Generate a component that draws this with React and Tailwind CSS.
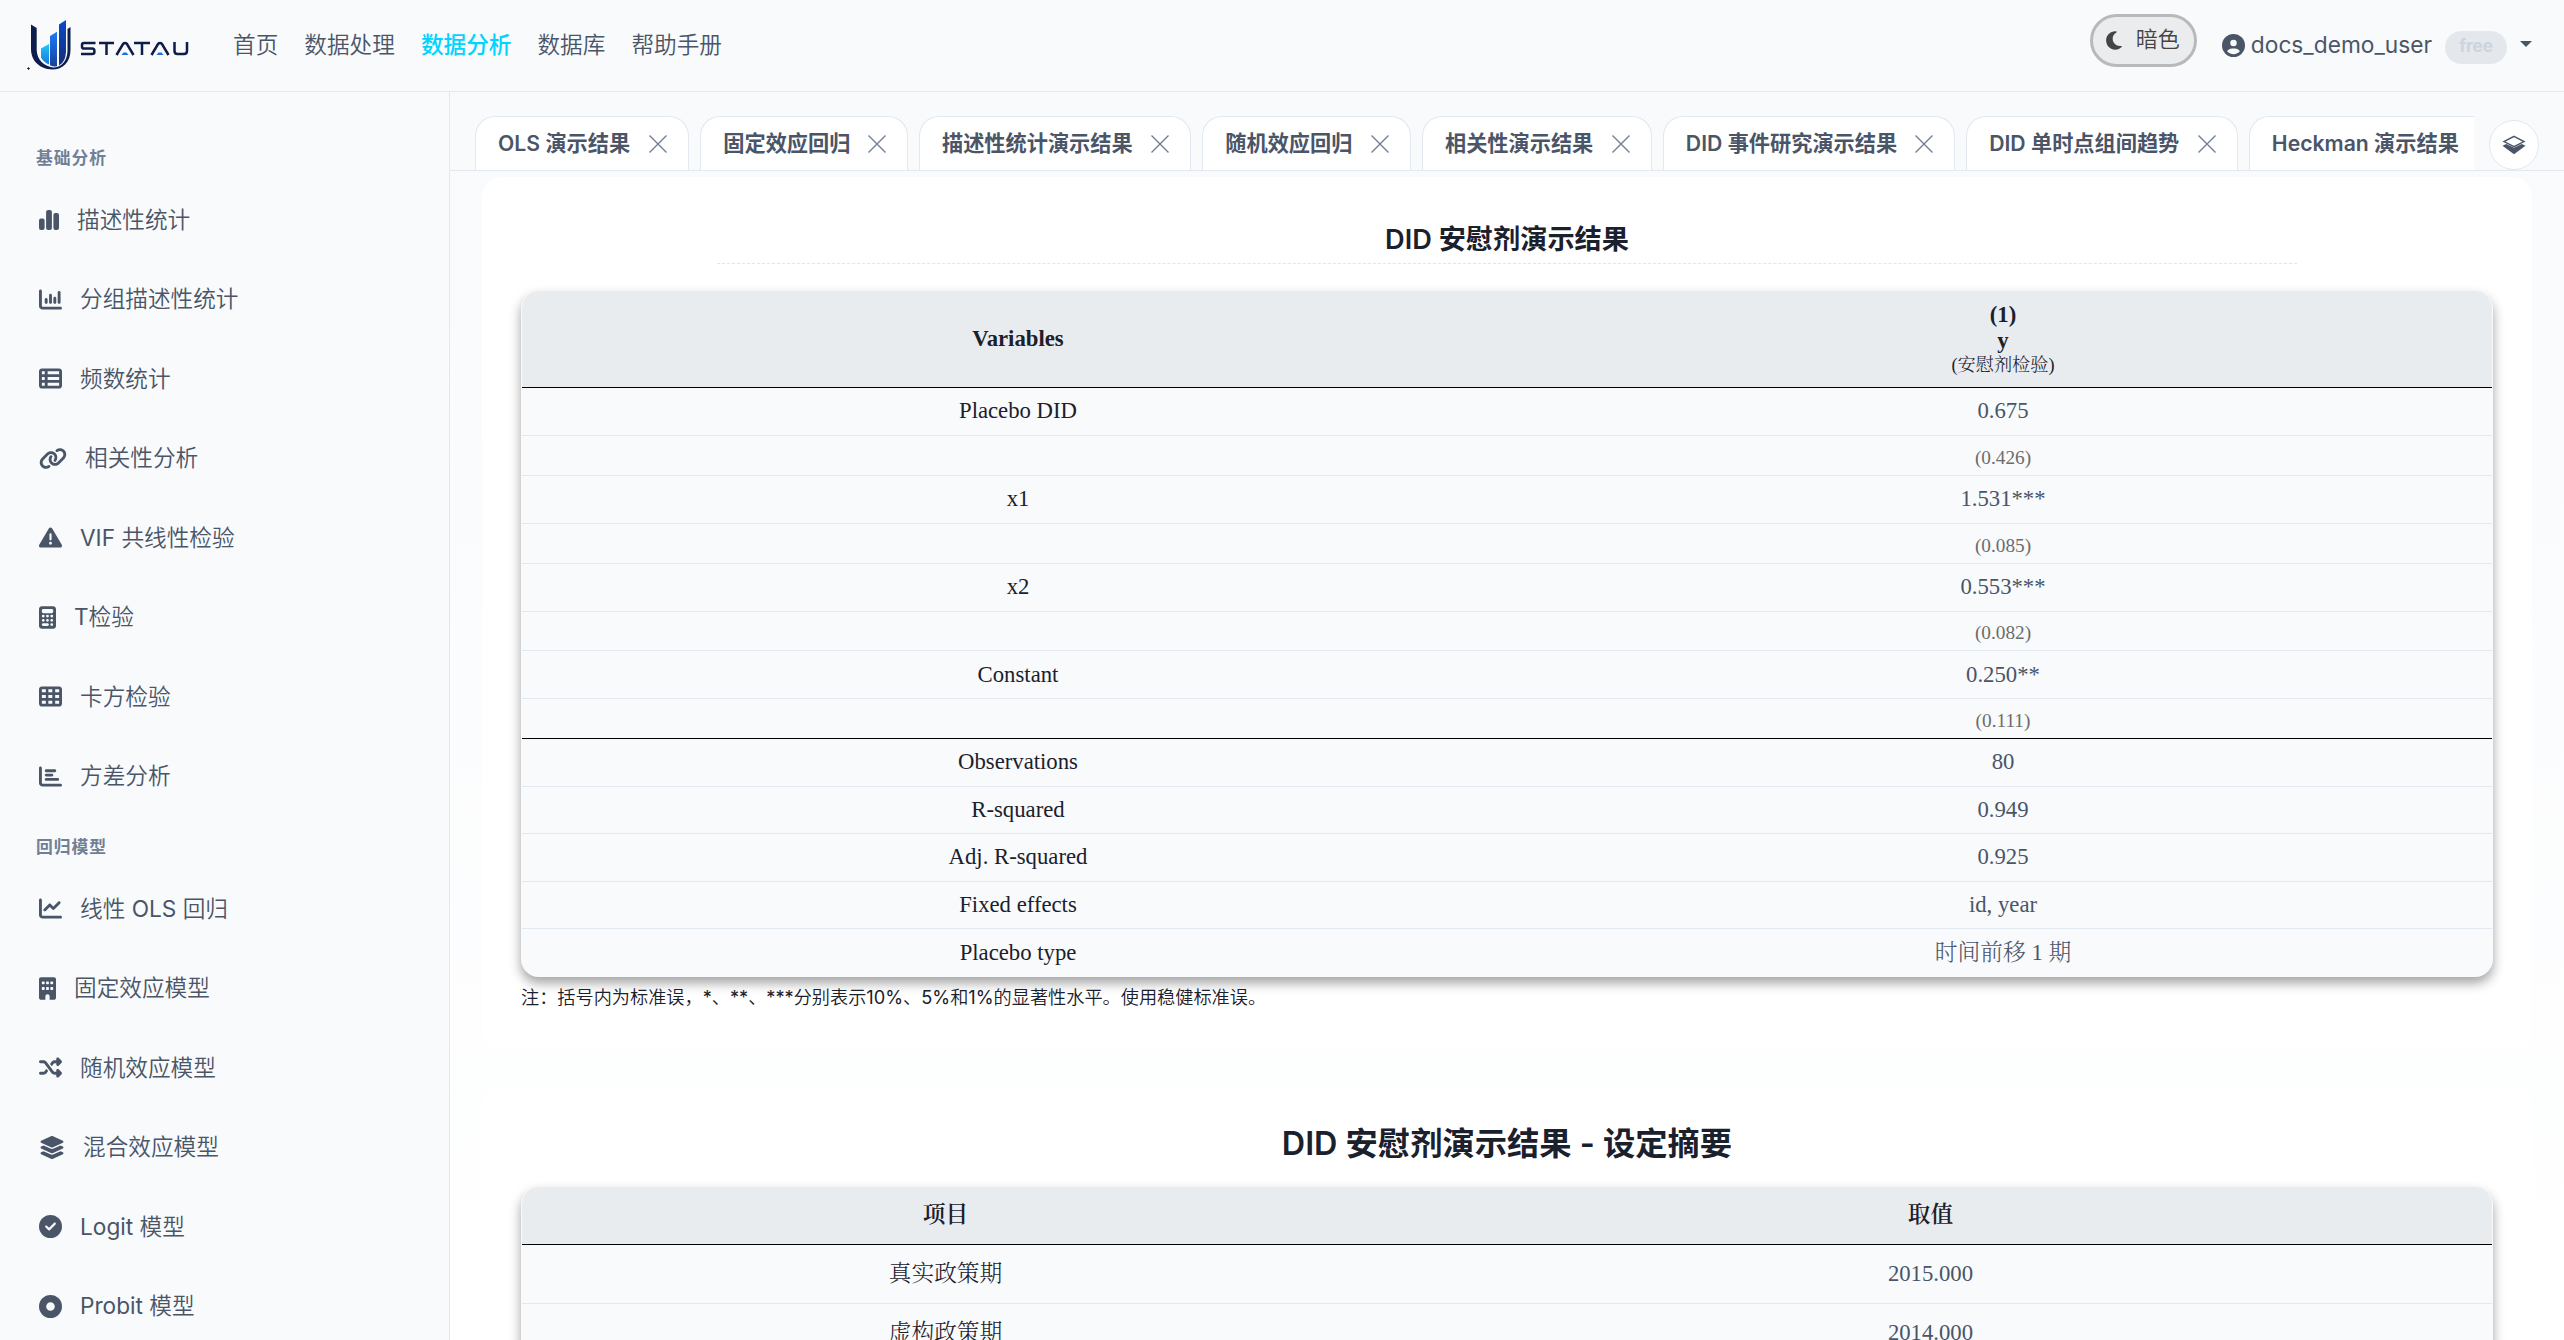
import {
  FaChartColumn,
  FaTableList,
  FaLink,
  FaTriangleExclamation,
  FaCalculator,
  FaTableCells,
  FaChartBar,
  FaChartLine,
  FaBuilding,
  FaShuffle,
  FaLayerGroup,
  FaCircleCheck,
  FaCircleDot,
  FaMoon,
  FaCircleUser,
} from 'react-icons/fa6';

const navItems = ['首页', '数据处理', '数据分析', '数据库', '帮助手册'];

const SimpleBars = ({ className }) => (
  <svg viewBox="0 0 20 20" className={className} fill="currentColor">
    <rect x="0" y="8.4" width="5.6" height="11.6" rx="2" />
    <rect x="7.1" y="0" width="5.8" height="20" rx="2" />
    <rect x="14.4" y="3" width="5.6" height="17" rx="2" />
  </svg>
);

const menu = [
  {
    title: '基础分析',
    items: [
      { label: '描述性统计', icon: SimpleBars, size: 'w-[20px] h-[20px]' },
      { label: '分组描述性统计', icon: FaChartColumn, size: 'w-[23px] h-[23px]' },
      { label: '频数统计', icon: FaTableList, size: 'w-[23px] h-[23px]' },
      { label: '相关性分析', icon: FaLink, size: 'w-[28px] h-[23px]' },
      { label: 'VIF 共线性检验', icon: FaTriangleExclamation, size: 'w-[23px] h-[23px]' },
      { label: 'T检验', icon: FaCalculator, size: 'w-[17px] h-[23px]' },
      { label: '卡方检验', icon: FaTableCells, size: 'w-[23px] h-[23px]' },
      { label: '方差分析', icon: FaChartBar, size: 'w-[23px] h-[23px]' },
    ],
  },
  {
    title: '回归模型',
    items: [
      { label: '线性 OLS 回归', icon: FaChartLine, size: 'w-[23px] h-[23px]' },
      { label: '固定效应模型', icon: FaBuilding, size: 'w-[17px] h-[23px]' },
      { label: '随机效应模型', icon: FaShuffle, size: 'w-[23px] h-[23px]' },
      { label: '混合效应模型', icon: FaLayerGroup, size: 'w-[26px] h-[23px]' },
      { label: 'Logit 模型', icon: FaCircleCheck, size: 'w-[23px] h-[23px]' },
      { label: 'Probit 模型', icon: FaCircleDot, size: 'w-[23px] h-[23px]' },
    ],
  },
];

const tabs = [
  { label: 'OLS 演示结果', width: 'w-[214.3px]' },
  { label: '固定效应回归', width: 'w-[207.7px]' },
  { label: '描述性统计演示结果', width: 'w-[272.3px]' },
  { label: '随机效应回归', width: 'w-[208.7px]' },
  { label: '相关性演示结果', width: 'w-[229.9px]' },
  { label: 'DID 事件研究演示结果', width: 'w-[292.3px]' },
  { label: 'DID 单时点组间趋势', width: 'w-[271.7px]' },
  { label: 'Heckman 演示结果', width: 'w-[290px]' },
];

const results = [
  { name: 'Placebo DID', value: '0.675', se: '(0.426)' },
  { name: 'x1', value: '1.531***', se: '(0.085)' },
  { name: 'x2', value: '0.553***', se: '(0.082)' },
  { name: 'Constant', value: '0.250**', se: '(0.111)' },
];

const stats = [
  ['Observations', '80'],
  ['R-squared', '0.949'],
  ['Adj. R-squared', '0.925'],
  ['Fixed effects', 'id, year'],
  ['Placebo type', '时间前移 1 期'],
];

const summary = [
  ['真实政策期', '2015.000'],
  ['虚构政策期', '2014.000'],
];

const Logo = () => (
  <svg viewBox="0 0 180 70" className="w-[180px] h-[70px]">
    <defs>
      <linearGradient id="bar1" x1="0" y1="0" x2="0" y2="1">
        <stop offset="0" stopColor="#1ec8fa" />
        <stop offset="1" stopColor="#1b76d8" />
      </linearGradient>
      <linearGradient id="bar2" x1="0" y1="0" x2="0" y2="1">
        <stop offset="0" stopColor="#1c7cfa" />
        <stop offset="1" stopColor="#173f9c" />
      </linearGradient>
      <linearGradient id="bar3" x1="0" y1="0" x2="0" y2="1">
        <stop offset="0" stopColor="#0a49c8" />
        <stop offset="1" stopColor="#142c78" />
      </linearGradient>
    </defs>
    {/* U shaped frame */}
    <path d="M11 14.5 L16.7 18 V40 C17 50 24 56 33 57.6 C42 57.5 47.3 50 47.5 41 V19 L50.5 17 V40 C50.5 52 43 59.5 32 59.5 C20 59 11 51 11 39 Z" fill="#0d1d4d" />
    <path d="M21 38.5 L29 34 V54.5 Q23.5 52 21 47.5 Z" fill="url(#bar1)" />
    <path d="M30 26 L37 21.7 V56.3 Q33 56.8 30 55.2 Z" fill="url(#bar2)" />
    <path d="M39 14.5 L46 10 V42 Q45.5 52 39 55.6 Z" fill="url(#bar3)" />
    <path d="M7 58.5 H10 M8.5 57 V60" stroke="#0d1d4d" strokeWidth="0.8" />
    {/* Wordmark strokes */}
    <g fill="none" stroke="#0e1c48" strokeWidth="2.5">
      <path d="M75.5 33 H64 Q62 33 62 35 V36.5 Q62 38.6 64 38.6 H72 Q74.4 38.6 74.4 41 V42 Q74.4 44 72 44 H61" />
      <path d="M79 33 H94 M86.5 33 V45" />
      <path d="M96.5 45 L103 34 Q105 32 107 34 L113.5 45" />
      <path d="M114 33 H130 M122 33 V45" />
      <path d="M131.5 45 L138 34 Q140 32 142 34 L148.5 45" />
      <path d="M154.5 32 V41 Q154.5 44 157.5 44 H164 Q167 44 167 41 V32" />
    </g>
    <path d="M101.5 45 L103.5 42.5 H106.5 L108.5 45 Z" fill="#1b6fe8" />
    <path d="M136.5 45 L138.5 42.5 H141.5 L143.5 45 Z" fill="#1b6fe8" />
  </svg>
);

const CloseIcon = () => (
  <svg viewBox="0 0 18 18" className="w-[18px] h-[18px] shrink-0" stroke="#718096" strokeWidth="1.4">
    <path d="M0.5 0.5 L17.5 17.5 M17.5 0.5 L0.5 17.5" />
  </svg>
);

const StackIcon = () => (
  <svg viewBox="0 0 24 20" className="w-[24px] h-[20px]">
    <path d="M12 1.3 L22 6.6 L12 11.6 L2 6.6 Z" fill="none" stroke="#4a5568" strokeWidth="1.4" />
    <path d="M0.5 10.8 L4.2 9 L12 12.8 L19.8 9 L23.5 10.8 L12 19.2 Z" fill="#4a5568" />
  </svg>
);

// Lighter CJK face for body text, the full family for anything bold
const bodyFont = "font-['Inter','Noto_Sans_CJK_SC_DemiLight','Noto_Sans_CJK_SC',sans-serif]";
const boldFont = "font-['Inter','Noto_Sans_CJK_SC',sans-serif]";

const Header = () => (
  <header className="flex h-[92px] shrink-0 border-b border-[#e2e8f0] bg-[#f8fafc]">
    <div className="pl-5 pt-[10px] w-[233px]">
      <Logo />
    </div>
    <nav className="flex gap-[26px] h-[90px] items-center text-[22.65px]">
      {navItems.map((item) => (
        <a key={item} className={item === '数据分析' ? `${boldFont} text-[#00d4ff] font-medium` : ''}>
          {item}
        </a>
      ))}
    </nav>
    <div className="ml-auto flex pr-8">
      <button className="mt-[14px] flex h-[53px] w-[107px] items-center gap-[13px] rounded-full border-[3px] border-[#b9b9b9] bg-[#ebecee] pl-3 text-[22px] text-[#444]">
        <FaMoon className="h-[21px] w-[18px] shrink-0" />
        <span className="whitespace-nowrap pb-[3px]">暗色</span>
      </button>
      <div className="ml-[25px] flex h-[90px] items-center">
        <FaCircleUser className="h-[23px] w-[23px]" />
        <span className="ml-[6px] text-[22.72px]">docs_demo_user</span>
        <span className="ml-[13px] mt-1 flex h-[33px] w-[62px] items-center justify-center rounded-full bg-[#e4e7eb] text-[17px] font-bold text-[#cbd5e0]">
          free
        </span>
        <svg viewBox="0 0 12 6" className="ml-[13px] mb-[2px] h-[6px] w-[12px]" fill="currentColor">
          <path d="M0 0 H12 L6 6 Z" />
        </svg>
      </div>
    </div>
  </header>
);

const Sidebar = () => (
  <aside className="w-[450px] shrink-0 overflow-hidden border-r border-[#e2e8f0] bg-[#f8fafc] pt-[42px]">
    {menu.map((group) => (
      <section key={group.title} className="mb-[7px]">
        <h3 className={`${boldFont} h-[46px] pl-9 text-[16.8px] font-semibold leading-[48px] tracking-[1px] text-[#718096]`}>
          {group.title}
        </h3>
        {group.items.map(({ label, icon: Icon, size }) => (
          <div key={label} className="flex h-[79.52px] items-center pl-[39px] text-[22.65px]">
            <Icon className={`${size} shrink-0`} />
            <span className="ml-[18px]">{label}</span>
          </div>
        ))}
      </section>
    ))}
  </aside>
);

const TabBar = () => (
  <div className="flex h-[79px] shrink-0 border-b border-[#e2e8f0] bg-[#f8fafc] pl-[25px] pt-6">
    <div className="flex w-[1999px] gap-[11px] overflow-hidden">
      {tabs.map(({ label, width }) => (
        <div
          key={label}
          className={`${width} ${boldFont} flex shrink-0 items-center justify-between rounded-t-[20px] border border-b-0 border-[#e2e8f0] bg-white pl-[22px] pr-[21px] text-[21.2px] font-semibold whitespace-nowrap`}
        >
          {label}
          <CloseIcon />
        </div>
      ))}
    </div>
    <button className="ml-[15px] mt-1 flex h-[50px] w-[50px] items-center justify-center rounded-full border border-[#e2e8f0] bg-white">
      <StackIcon />
    </button>
  </div>
);

const tableFont = "font-['Times_New_Roman','Liberation_Serif','Noto_Serif_CJK_SC_Light','Noto_Serif_CJK_SC',serif]";
const tableBox = `${tableFont} overflow-hidden rounded-[18px] border-x border-[#f8fafc] bg-[#f8fafc] text-center text-[22.72px] shadow-[0_6px_12px_rgba(0,0,0,0.37)]`;

const ResultTable = () => (
  <div className={tableBox}>
    <div className="grid h-[97px] grid-cols-[992px_1fr] items-center border-b border-black bg-[#e9ecef] font-bold text-[#1a202c]">
      <div>Variables</div>
      <div className="pt-[3px] leading-[25.5px]">
        <div>(1)</div>
        <div>y</div>
        <div className="text-[18.2px] font-normal text-[#1a202c]">(安慰剂检验)</div>
      </div>
    </div>
    {results.map(({ name, value, se }, i) => (
      <div key={name}>
        <div className="grid h-[48px] grid-cols-[992px_1fr] items-center border-b border-[#e2e8f0]">
          <div className="text-[#1a202c]">{name}</div>
          <div>{value}</div>
        </div>
        <div
          className={`grid h-[39.75px] grid-cols-[992px_1fr] items-center border-b pt-[6px] text-[19.3px] ${
            i === results.length - 1 ? 'border-black' : 'border-[#e2e8f0]'
          }`}
        >
          <div />
          <div className="text-[#6c6c6c]">{se}</div>
        </div>
      </div>
    ))}
    {stats.map(([name, value]) => (
      <div key={name} className="grid h-[47.6px] grid-cols-[992px_1fr] items-center border-b border-[#e2e8f0] last:border-b-0">
        <div className="text-[#1a202c]">{name}</div>
        <div>{value}</div>
      </div>
    ))}
  </div>
);

const SummaryTable = () => (
  <div className={tableBox}>
    <div className="grid h-[58px] grid-cols-[847px_1fr] items-center border-b border-black bg-[#e9ecef] font-['Liberation_Serif','Noto_Serif_CJK_SC',serif] font-semibold text-[#1a202c]">
      <div>项目</div>
      <div>取值</div>
    </div>
    {summary.map(([name, value]) => (
      <div key={name} className="grid h-[59px] grid-cols-[847px_1fr] items-center border-b border-[#e2e8f0]">
        <div className="text-[#1a202c]">{name}</div>
        <div>{value}</div>
      </div>
    ))}
  </div>
);

export default function App() {
  return (
    <div
      lang="zh-CN"
      className={`${bodyFont} flex h-[1340px] w-[2564px] flex-col overflow-hidden bg-[#f8fafc] text-[#4a5568]`}
    >
      <Header />
      <div className="flex min-h-0 flex-1">
        <Sidebar />
        <main className="flex min-w-0 flex-1 flex-col overflow-hidden bg-linear-to-b from-[#f8fafc] to-white">
          <TabBar />
          <div className="min-h-0 flex-1 overflow-hidden pl-[32px] pr-[32px] pt-[6px]">
            {/* Regression results */}
            <div className="h-[873px] rounded-[20px] bg-white px-[39px] pt-[38px]">
              <h2 className={`${boldFont} mx-auto h-[49px] w-[1580px] border-b border-dashed border-[#e2e5e9] text-center text-[27.2px] font-semibold leading-[49px] text-[#1a202c]`}>
                DID 安慰剂演示结果
              </h2>
              <div className="mt-[27px]">
                <ResultTable />
              </div>
              <p className="mt-1 text-[18.18px] leading-[32px] text-[#1a202c]">
                注：括号内为标准误，*、**、***分别表示10%、5%和1%的显著性水平。使用稳健标准误。
              </p>
            </div>
            {/* Setup summary */}
            <div className="mt-9 rounded-[20px] bg-white px-[39px] pt-[34px]">
              <h2 className={`${boldFont} text-center text-[32.3px] font-semibold leading-[48px] text-[#1a202c]`}>
                DID 安慰剂演示结果 - 设定摘要
              </h2>
              <div className="mt-[19px]">
                <SummaryTable />
              </div>
            </div>
          </div>
        </main>
      </div>
    </div>
  );
}
